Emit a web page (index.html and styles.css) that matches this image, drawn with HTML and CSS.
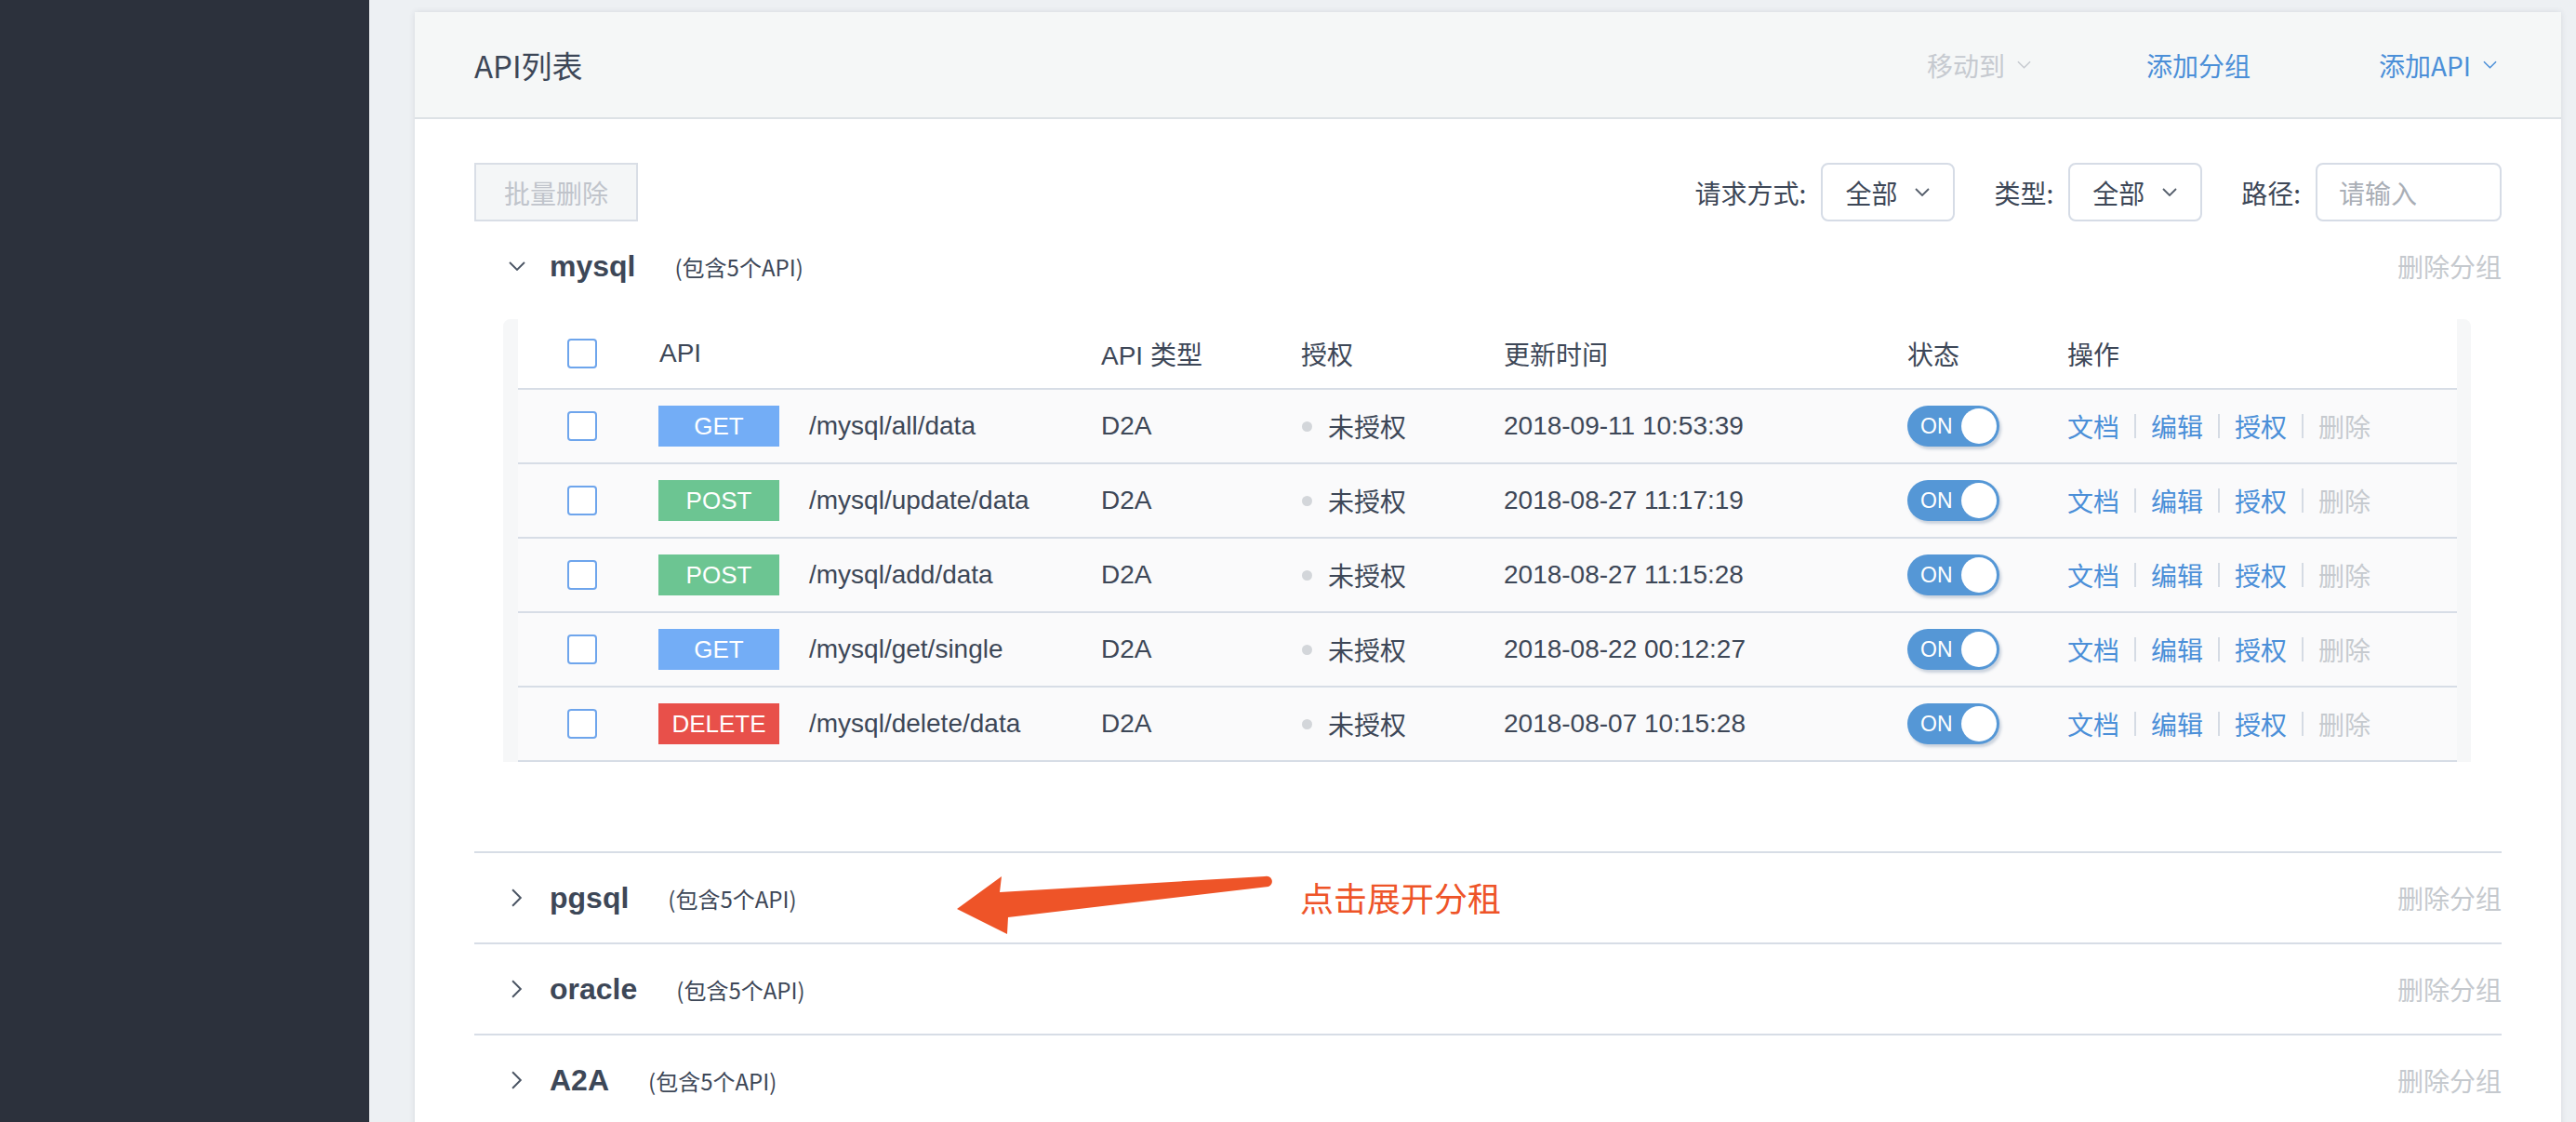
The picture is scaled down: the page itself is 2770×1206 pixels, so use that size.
FILE: index.html
```html
<!DOCTYPE html>
<html lang="zh-CN">
<head>
<meta charset="utf-8">
<title>API列表</title>
<link rel="stylesheet" href="styles.css">
</head>
<body>
<div class="layout">
  <aside class="sidebar"></aside>
  <main class="main">
    <section class="card">
      <header class="card-head">
        <h1 class="title">API列表</h1>
        <div class="head-actions">
          <span class="act act-disabled">移动到<svg class="chev-down-sm" viewBox="0 0 16 9"><polyline points="1,1 8,8 15,1"/></svg></span>
          <span class="act act-link act-group">添加分组</span>
          <span class="act act-link act-api">添加API<svg class="chev-down-sm" viewBox="0 0 16 9"><polyline points="1,1 8,8 15,1"/></svg></span>
        </div>
      </header>
      <div class="card-body">
        <div class="toolbar">
          <button class="btn-batch" type="button">批量删除</button>
          <div class="filters">
            <span class="f-label">请求方式:</span>
            <div class="select"><span>全部</span><svg class="chev-select" viewBox="0 0 16 9"><polyline points="1,1 8,8 15,1"/></svg></div>
            <span class="f-label">类型:</span>
            <div class="select"><span>全部</span><svg class="chev-select" viewBox="0 0 16 9"><polyline points="1,1 8,8 15,1"/></svg></div>
            <span class="f-label">路径:</span>
            <div class="input"><span class="placeholder">请输入</span></div>
          </div>
        </div>

        <div class="groups">
          <div class="group group-open">
            <div class="group-head">
              <span class="g-chev"><svg class="chev-down" viewBox="0 0 18 10"><polyline points="1,1 9,9 17,1"/></svg></span>
              <span class="g-name">mysql</span>
              <span class="g-count">(包含5个API)</span>
              <span class="g-del">删除分组</span>
            </div>
            <div class="table-wrap">
              <div class="table">
                <div class="tr th">
                  <div class="td c-check"><span class="checkbox"></span></div>
                  <div class="td">API</div>
                  <div class="td">API 类型</div>
                  <div class="td">授权</div>
                  <div class="td">更新时间</div>
                  <div class="td">状态</div>
                  <div class="td">操作</div>
                </div>

                <div class="tr">
                  <div class="td c-check"><span class="checkbox"></span></div>
                  <div class="td"><span class="badge b-get">GET</span><span class="path">/mysql/all/data</span></div>
                  <div class="td">D2A</div>
                  <div class="td"><span class="dot"></span>未授权</div>
                  <div class="td">2018-09-11 10:53:39</div>
                  <div class="td"><span class="toggle"><span class="t-text">ON</span><span class="knob"></span></span></div>
                  <div class="td ops"><a>文档</a><i class="sep"></i><a>编辑</a><i class="sep"></i><a>授权</a><i class="sep"></i><a class="off">删除</a></div>
                </div>

                <div class="tr">
                  <div class="td c-check"><span class="checkbox"></span></div>
                  <div class="td"><span class="badge b-post">POST</span><span class="path">/mysql/update/data</span></div>
                  <div class="td">D2A</div>
                  <div class="td"><span class="dot"></span>未授权</div>
                  <div class="td">2018-08-27 11:17:19</div>
                  <div class="td"><span class="toggle"><span class="t-text">ON</span><span class="knob"></span></span></div>
                  <div class="td ops"><a>文档</a><i class="sep"></i><a>编辑</a><i class="sep"></i><a>授权</a><i class="sep"></i><a class="off">删除</a></div>
                </div>

                <div class="tr">
                  <div class="td c-check"><span class="checkbox"></span></div>
                  <div class="td"><span class="badge b-post">POST</span><span class="path">/mysql/add/data</span></div>
                  <div class="td">D2A</div>
                  <div class="td"><span class="dot"></span>未授权</div>
                  <div class="td">2018-08-27 11:15:28</div>
                  <div class="td"><span class="toggle"><span class="t-text">ON</span><span class="knob"></span></span></div>
                  <div class="td ops"><a>文档</a><i class="sep"></i><a>编辑</a><i class="sep"></i><a>授权</a><i class="sep"></i><a class="off">删除</a></div>
                </div>

                <div class="tr">
                  <div class="td c-check"><span class="checkbox"></span></div>
                  <div class="td"><span class="badge b-get">GET</span><span class="path">/mysql/get/single</span></div>
                  <div class="td">D2A</div>
                  <div class="td"><span class="dot"></span>未授权</div>
                  <div class="td">2018-08-22 00:12:27</div>
                  <div class="td"><span class="toggle"><span class="t-text">ON</span><span class="knob"></span></span></div>
                  <div class="td ops"><a>文档</a><i class="sep"></i><a>编辑</a><i class="sep"></i><a>授权</a><i class="sep"></i><a class="off">删除</a></div>
                </div>

                <div class="tr">
                  <div class="td c-check"><span class="checkbox"></span></div>
                  <div class="td"><span class="badge b-delete">DELETE</span><span class="path">/mysql/delete/data</span></div>
                  <div class="td">D2A</div>
                  <div class="td"><span class="dot"></span>未授权</div>
                  <div class="td">2018-08-07 10:15:28</div>
                  <div class="td"><span class="toggle"><span class="t-text">ON</span><span class="knob"></span></span></div>
                  <div class="td ops"><a>文档</a><i class="sep"></i><a>编辑</a><i class="sep"></i><a>授权</a><i class="sep"></i><a class="off">删除</a></div>
                </div>
              </div>
            </div>
          </div>

          <div class="group">
            <div class="group-head">
              <span class="g-chev"><svg class="chev-right" viewBox="0 0 11 18"><polyline points="1,1 9,9 1,17"/></svg></span>
              <span class="g-name">pgsql</span>
              <span class="g-count">(包含5个API)</span>
              <span class="g-del">删除分组</span>
            </div>
          </div>

          <div class="group">
            <div class="group-head">
              <span class="g-chev"><svg class="chev-right" viewBox="0 0 11 18"><polyline points="1,1 9,9 1,17"/></svg></span>
              <span class="g-name">oracle</span>
              <span class="g-count">(包含5个API)</span>
              <span class="g-del">删除分组</span>
            </div>
          </div>

          <div class="group">
            <div class="group-head">
              <span class="g-chev"><svg class="chev-right" viewBox="0 0 11 18"><polyline points="1,1 9,9 1,17"/></svg></span>
              <span class="g-name">A2A</span>
              <span class="g-count">(包含5个API)</span>
              <span class="g-del">删除分组</span>
            </div>
          </div>
        </div>
      </div>
    </section>
  </main>
</div>

<div class="annot">
  <svg class="annot-arrow" viewBox="0 0 360 75"><path d="M9,42 L57,7 L55,24 L340,7 A5.5,5.5 0 0 1 344,18 L64,51 L63,69 Z"/></svg>
  <span class="annot-text">点击展开分租</span>
</div>
</body>
</html>
```

FILE: styles.css
```css
* { box-sizing: border-box; }

html, body {
  margin: 0;
  padding: 0;
}

body {
  width: 2770px;
  height: 1206px;
  overflow: hidden;
  position: relative;
  font-family: "Liberation Sans", "Noto Sans CJK SC", sans-serif;
  font-size: 28px;
  color: #3d4757;
  background: #eceff2;
}

.layout {
  display: flex;
  height: 1206px;
}

.sidebar {
  width: 397px;
  flex: 0 0 397px;
  background: #2c313c;
}

.main {
  flex: 1;
  padding: 13px 16px 0 49px;
  background: #edf0f3;
}

.card {
  background: #fff;
  height: 1300px;
  box-shadow: 0 0 6px rgba(40, 50, 70, 0.12);
}

/* header */
.card-head {
  height: 115px;
  display: flex;
  align-items: center;
  justify-content: space-between;
  padding: 0 69px 0 64px;
  background: #f5f7f7;
  border-bottom: 2px solid #dde2e6;
}

.title {
  margin: 0;
  font-size: 33px;
  font-weight: 400;
  color: #3d4757;
  font-family: "Noto Sans CJK SC", "Liberation Sans", sans-serif;
}

.head-actions {
  display: flex;
  align-items: center;
}

.act {
  display: flex;
  align-items: center;
  font-size: 28px;
  font-family: "Noto Sans CJK SC", "Liberation Sans", sans-serif;
}

.act-disabled { color: #c6cad0; }
.act-link { color: #4b8fd8; }
.act-group { margin-left: 124px; }
.act-api { margin-left: 138px; }

.chev-down-sm {
  width: 15px;
  height: 9px;
  margin-left: 13px;
  fill: none;
  stroke: currentColor;
  stroke-width: 1.6;
}

/* body */
.card-body {
  padding: 0 64px;
}

.toolbar {
  margin-top: 47px;
  height: 63px;
  display: flex;
  justify-content: space-between;
  align-items: center;
}

.btn-batch {
  width: 176px;
  height: 63px;
  border: 2px solid #d9dee6;
  background: #f4f6f7;
  color: #c0c4cb;
  font-size: 28px;
  font-family: "Noto Sans CJK SC", sans-serif;
  padding: 0;
  border-radius: 0;
}

.filters {
  display: flex;
  align-items: center;
}

.f-label {
  margin-right: 16px;
  color: #3d4757;
  font-family: "Noto Sans CJK SC", sans-serif;
}

.select {
  width: 144px;
  height: 63px;
  border: 2px solid #d6dce6;
  border-radius: 8px;
  display: flex;
  align-items: center;
  justify-content: space-between;
  padding: 0 25px 0 24px;
  margin-right: 42px;
  font-family: "Noto Sans CJK SC", sans-serif;
  color: #3d4757;
}

.chev-select {
  width: 16px;
  height: 9px;
  fill: none;
  stroke: #555e6b;
  stroke-width: 1.8;
}

.input {
  width: 200px;
  height: 63px;
  border: 2px solid #d6dce6;
  border-radius: 8px;
  display: flex;
  align-items: center;
  padding-left: 23px;
}

.placeholder {
  color: #a9aeb6;
  font-family: "Noto Sans CJK SC", sans-serif;
}

/* groups */
.group + .group {
  border-top: 2px solid #d7dde6;
}

.group-head {
  height: 96px;
  display: flex;
  align-items: center;
  padding-left: 35px;
}

.g-chev {
  width: 22px;
  height: 22px;
  display: flex;
  align-items: center;
  justify-content: center;
  margin-right: 24px;
}

.chev-down {
  width: 18px;
  height: 10px;
  fill: none;
  stroke: #4a5463;
  stroke-width: 1.8;
}

.chev-right {
  width: 12px;
  height: 20px;
  fill: none;
  stroke: #4a5463;
  stroke-width: 1.8;
}

.g-name {
  font-size: 32px;
  font-weight: 700;
  color: #3d4757;
}

.g-count {
  margin-left: 42px;
  font-size: 24px;
  color: #3d4757;
  font-family: "Noto Sans CJK SC", sans-serif;
}

.g-del {
  margin-left: auto;
  color: #c5c9ce;
  font-family: "Noto Sans CJK SC", sans-serif;
}

.group-open {
  padding-bottom: 96px;
}

/* table */
.table-wrap {
  margin: 9px 33px 0 31px;
  padding: 0 15px 0 16px;
  background: #f6f7f8;
  border-radius: 8px 8px 0 0;
}

.tr {
  display: grid;
  grid-template-columns: 152px 475px 215px 218px 434px 172px 1fr;
  align-items: center;
  height: 80px;
  background: #fafafb;
  border-bottom: 2px solid #d7dde6;
}

.tr.th {
  height: 76px;
  background: #fff;
}

.td {
  display: flex;
  align-items: center;
  white-space: nowrap;
  color: #3d4757;
  font-family: "Liberation Sans", "Noto Sans CJK SC", sans-serif;
}

.c-check {
  padding-left: 53px;
}

.checkbox {
  width: 32px;
  height: 32px;
  border: 2px solid #6ea5ec;
  border-radius: 4px;
  background: #fff;
}

.badge {
  width: 130px;
  height: 44px;
  display: flex;
  align-items: center;
  justify-content: center;
  color: #fff;
  font-size: 26px;
  margin-left: -1px;
}

.b-get { background: #73adf6; }
.b-post { background: #6cc592; }
.b-delete { background: #e8504a; }

.path {
  margin-left: 32px;
}

.dot {
  width: 11px;
  height: 11px;
  border-radius: 50%;
  background: #d3d6da;
  margin-right: 17px;
  margin-left: 1px;
}

.toggle {
  position: relative;
  width: 99px;
  height: 44px;
  border-radius: 22px;
  background: #5597d6;
  display: flex;
  align-items: center;
  box-shadow: 2px 3px 3px rgba(60, 90, 130, 0.25);
}

.t-text {
  color: #fff;
  font-size: 23px;
  margin-left: 14px;
}

.knob {
  position: absolute;
  right: 3px;
  top: 3px;
  width: 38px;
  height: 38px;
  border-radius: 50%;
  background: #fff;
}

.ops a {
  color: #4b8fd8;
  font-family: "Noto Sans CJK SC", sans-serif;
}

.ops a.off {
  color: #c6cacf;
}

.sep {
  display: inline-block;
  width: 2px;
  height: 26px;
  background: #d5dbe4;
  margin: 0 16px;
}

/* annotation */
.annot-arrow {
  position: absolute;
  left: 1020px;
  top: 935px;
  width: 360px;
  height: 75px;
  fill: #ee5428;
}

.annot-text {
  position: absolute;
  left: 1398px;
  top: 944px;
  font-size: 36px;
  line-height: 40px;
  color: #ee5428;
  font-family: "Noto Sans CJK SC", sans-serif;
}
```
